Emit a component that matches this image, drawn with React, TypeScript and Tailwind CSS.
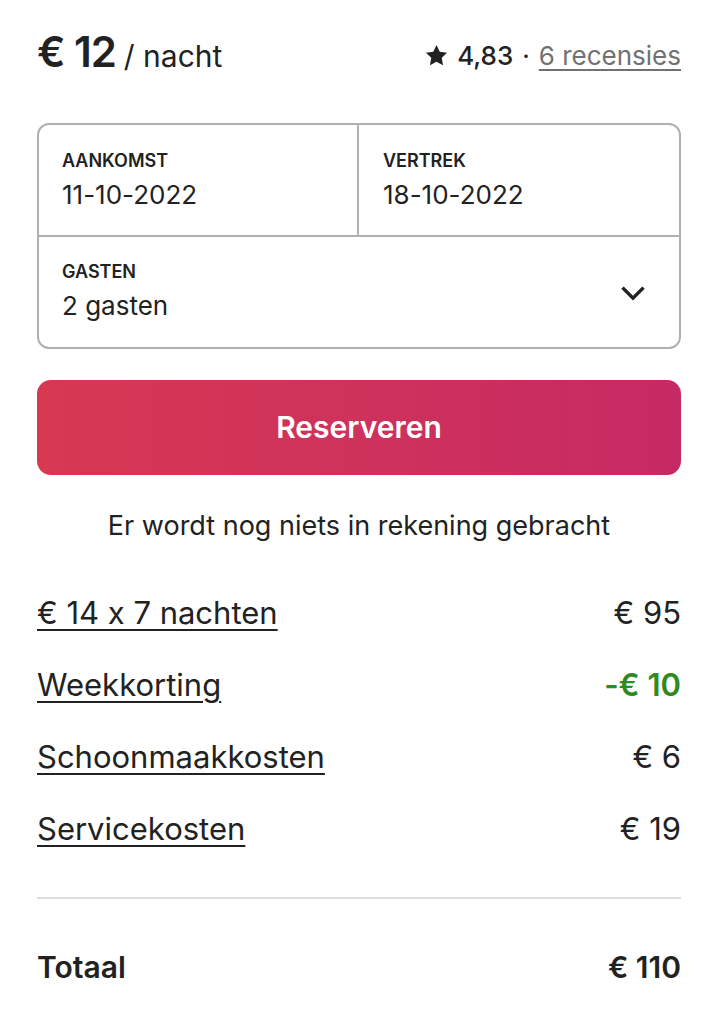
const rows = [
  { label: "€ 14 x 7 nachten", value: "€ 95" },
  { label: "Weekkorting", value: "-€ 10", discount: true },
  { label: "Schoonmaakkosten", value: "€ 6" },
  { label: "Servicekosten", value: "€ 19" },
]

const App = () => {
  return (
    <div className="bg-white pl-[37px] pr-[35px] pt-[20px] pb-10 text-[#222222] font-['Inter',sans-serif] [font-feature-settings:'calt'_0]">
      {/* Header */}
      <div className="flex items-baseline justify-between">
        <div className="flex items-baseline gap-2">
          <span className="text-[42px] font-semibold tracking-tight">€ 12</span>
          <span className="text-[30px] font-normal">/ nacht</span>
        </div>
        <div className="flex items-center gap-[9px] text-[26px]">
          <svg viewBox="0 0 32 32" className="w-[23px] h-[23px] fill-[#222222]">
            <path d="M16 1.5l4.5 9.3 10.2 1.4-7.4 7.1 1.8 10.1L16 24.6l-9.1 4.8 1.8-10.1-7.4-7.1 10.2-1.4z" />
          </svg>
          <span className="font-medium">4,83</span>
          <span>·</span>
          <a className="text-[#717171] underline underline-offset-4 decoration-2">6 recensies</a>
        </div>
      </div>

      {/* Dates & guests */}
      <div className="mt-[40px] rounded-[12px] border-2 border-[#b0b0b0] overflow-hidden">
        <div className="grid grid-cols-2 h-[112px] border-b-2 border-[#b0b0b0]">
          <div className="px-[23px] pt-[24px] border-r-2 border-[#b0b0b0]">
            <div className="text-[18px] font-semibold leading-6">AANKOMST</div>
            <div className="mt-1 text-[26px] font-normal leading-9">11-10-2022</div>
          </div>
          <div className="px-[24px] pt-[24px]">
            <div className="text-[18px] font-semibold leading-6">VERTREK</div>
            <div className="mt-1 text-[26px] font-normal leading-9">18-10-2022</div>
          </div>
        </div>
        <div className="flex items-center justify-between h-[110px] pl-[23px] pr-[32px]">
          <div>
            <div className="text-[18px] font-semibold leading-6">GASTEN</div>
            <div className="mt-1 text-[26px] font-normal leading-9">2 gasten</div>
          </div>
          <svg viewBox="0 0 32 32" className="w-[28px] h-[28px] fill-none stroke-[#222222] stroke-[4]">
            <path d="M4 11l12 12 12-12" />
          </svg>
        </div>
      </div>

      {/* Reserve */}
      <button className="mt-[31px] w-full h-[95px] rounded-[14px] bg-gradient-to-r from-[#d73852] to-[#c62a63] text-white text-[30px] font-semibold">
        Reserveren
      </button>
      <p className="mt-[31px] text-center text-[27px] font-normal">Er wordt nog niets in rekening gebracht</p>

      {/* Price breakdown */}
      <div className="mt-[45px] flex flex-col gap-[30px]">
        {rows.map((row) => (
          <div key={row.label} className="flex justify-between items-center text-[31px] leading-[42px]">
            <span className="font-normal underline underline-offset-[5px] decoration-2">{row.label}</span>
            <span className={row.discount ? "text-[#2f8a1f] font-semibold" : "font-normal"}>{row.value}</span>
          </div>
        ))}
      </div>
      <hr className="mt-[47px] border-t-2 border-[#dddddd]" />
      <div className="mt-[46px] flex justify-between text-[30px] font-semibold">
        <span>Totaal</span>
        <span>€ 110</span>
      </div>
    </div>
  )
}

export default App
